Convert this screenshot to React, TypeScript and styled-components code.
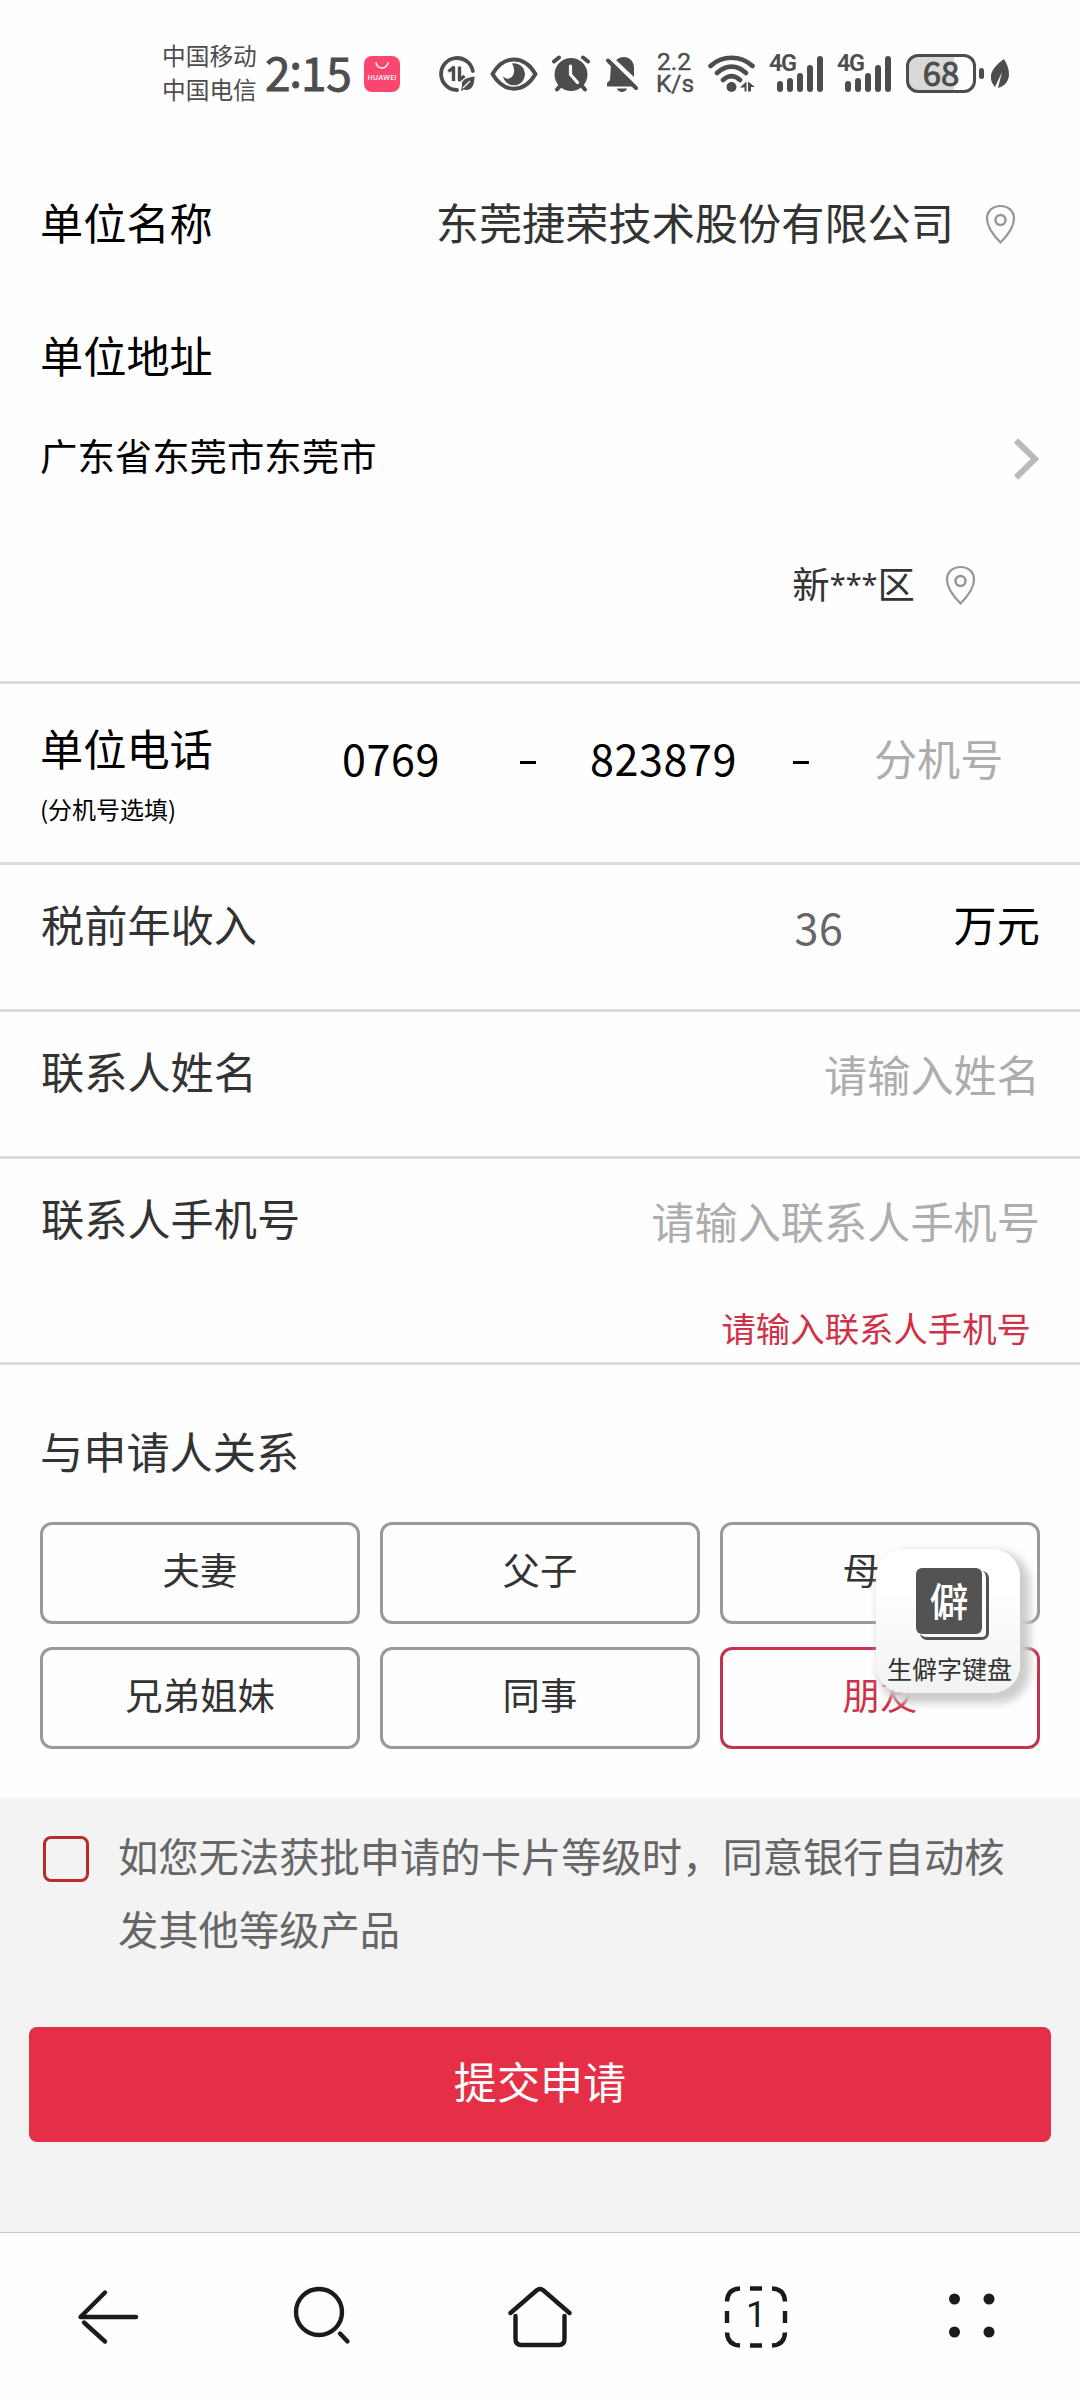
import React from 'react';
import styled, { createGlobalStyle } from 'styled-components';

const GlobalStyle = createGlobalStyle`
  * { box-sizing: border-box; }
  body {
    margin: 0;
    background: #fff;
    font-family: "Noto Sans CJK SC", "Noto Sans", sans-serif;
  }
`;

const Screen = styled.div`
  position: relative;
  display: flex;
  flex-direction: column;
  width: 1080px;
  height: 2400px;
  overflow: hidden;
  background: #fefefe;
  color: #333;
`;

/* ---------- status bar ---------- */

const StatusBar = styled.header`
  display: flex;
  align-items: center;
  height: 146px;
  padding-left: 162px;
  color: #4d4d4d;
`;

const Carriers = styled.div`
  width: 102px;
  font-size: 23.7px;
  line-height: 34px;
  margin-top: -3px;
  white-space: nowrap;
`;

const Clock = styled.div`
  display: flex;
  width: 100px;
  font-size: 46px;
  font-weight: 400;
  -webkit-text-stroke: 0.9px #4d4d4d;
  line-height: 60px;
  letter-spacing: -0.2px;
  padding-left: 1px;
  margin-top: -5px;
`;

const Colon = styled.span`
  margin: -4px -1px 0 -1px;
`;

const StatusIcon = styled.svg<{ $w: number; $gap: number }>`
  flex: none;
  width: ${p => p.$w}px;
  height: 46px;
  margin-right: ${p => p.$gap}px;
  margin-top: 1px;
`;

const NetSpeed = styled.div`
  display: flex;
  flex-direction: column;
  width: 36px;
  margin-right: 16px;
  font-size: 24.5px;
  line-height: 22px;
  text-align: center;
  font-family: Roboto, sans-serif;
  -webkit-text-stroke: 0.4px #4d4d4d;
`;

const Signal = styled.div`
  position: relative;
  width: 54px;
  height: 46px;
  margin-right: 14px;
`;

const SignalTag = styled.span`
  position: absolute;
  left: 0;
  top: 2px;
  font: 600 23.5px/23px Roboto, sans-serif;
  letter-spacing: -1.5px;
`;

const SignalBars = styled.div`
  display: flex;
  align-items: flex-end;
  gap: 4px;
  height: 42px;
  padding-left: 8px;
`;

const Bar = styled.i<{ $h: number }>`
  width: 6px;
  height: ${p => p.$h}px;
  border-radius: 3px;
  background: #4d4d4d;
`;

const Battery = styled.div`
  width: 70px;
  height: 39px;
  margin-left: 1px;
  border: 3px solid #4d4d4d;
  border-radius: 12px;
  background: linear-gradient(90deg, #d9d9d9 70%, #fefefe 70%);
  text-align: center;
  font-size: 33px;
  font-weight: 400;
  -webkit-text-stroke: 1px #4d4d4d;
  line-height: 30px;
`;

const BatteryNub = styled.i`
  width: 5px;
  height: 11px;
  margin: 0 6px 0 3px;
  border-radius: 3px;
  background: #4d4d4d;
`;

/* ---------- form ---------- */

const Row = styled.div<{ $h: number; $line?: boolean; $pb?: number }>`
  display: flex;
  flex: none;
  align-items: center;
  height: ${p => p.$h}px;
  padding: 0 40px ${p => p.$pb ?? 0}px;
  border-bottom: ${p => (p.$line ? '3px solid #dcdcdc' : 'none')};
`;

const Label = styled.span<{ $dark?: boolean }>`
  font-size: 43.2px;
  line-height: 64px;
  white-space: nowrap;
  color: ${p => (p.$dark ? '#000' : '#333')};
`;

const Value = styled(Label)`
  margin-left: auto;
`;

const Address = styled.span<{ $dark?: boolean }>`
  font-size: 37.4px;
  line-height: 56px;
  color: ${p => (p.$dark ? '#000' : '#333')};
`;

const PlaceValue = styled(Address)`
  display: flex;
  margin: 2px 0 0 auto;
`;

const Masked = styled.span`
  font-family: "Noto Sans", sans-serif;
  font-size: 29px;
  line-height: 58px;
`;

const Pin = styled.svg<{ $left: number; $right: number }>`
  width: 31px;
  height: 40px;
  margin: 5px ${p => p.$right}px 0 ${p => p.$left}px;
`;

const Chevron = styled.svg`
  width: 26px;
  height: 42px;
  margin: 8px 0 0 auto;
`;

const Placeholder = styled(Label)`
  margin-left: auto;
  color: #adadad;
`;

const FieldRow = styled.div<{ $h: number }>`
  display: flex;
  flex: none;
  flex-direction: column;
  height: ${p => p.$h}px;
  padding: 26px 40px 0 41px;
  border-bottom: 3px solid #dcdcdc;
`;

const FieldLine = styled.div`
  display: flex;
  align-items: flex-start;

  ${Placeholder} {
    padding-top: 3px;
  }
`;

const Amount = styled.span`
  margin: 3px 110px 0 auto;
  font-size: 43.1px;
  line-height: 64px;
  letter-spacing: 0.6px;
  color: #666;
`;

const ErrorText = styled.p`
  margin: 50px 9px 0 0;
  text-align: right;
  font-size: 34.4px;
  line-height: 50px;
  color: #cf3248;
`;

const PhoneRow = styled.div`
  display: grid;
  grid-template-columns: 302px 178px 70px 203px 81px 1fr;
  flex: none;
  height: 181px;
  padding: 0 40px;
  border-bottom: 3px solid #dcdcdc;
`;

const PhoneLabel = styled.div`
  display: flex;
  flex-direction: column;
  padding-top: 31px;
`;

const Hint = styled.span`
  font-size: 24px;
  line-height: 36px;
  margin-top: 12px;
  color: #000;
`;

const PhonePart = styled.span<{ $muted?: boolean }>`
  padding-top: 41px;
  font-size: 43.1px;
  line-height: 64px;
  letter-spacing: ${p => (p.$muted ? 0 : 0.6)}px;
  color: ${p => (p.$muted ? '#adadad' : '#000')};
`;

const Dash = styled.i`
  width: 16px;
  height: 3px;
  margin-top: 77px;
  background: #000;
`;

const Relation = styled.section`
  display: flex;
  flex: none;
  flex-direction: column;
  height: 433px;
  padding: 53px 40px 0;
`;

const Options = styled.div`
  display: grid;
  grid-template-columns: repeat(3, 320px);
  gap: 23px 20px;
  margin-top: 40px;
`;

const Option = styled.button<{ $on?: boolean }>`
  height: 102px;
  padding: 0 0 8px;
  border: 3px solid ${p => (p.$on ? '#c23350' : '#999')};
  border-radius: 12px;
  background: #fefefe;
  color: ${p => (p.$on ? '#d0304a' : '#333')};
  font-family: inherit;
  font-size: 37.4px;
  line-height: 56px;
`;

/* ---------- agreement and submit ---------- */

const Footer = styled.section`
  display: flex;
  flex-direction: column;
  flex: none;
  height: 434px;
  background: #f3f3f3;
`;

const Agreement = styled.div`
  display: flex;
  padding: 20px 0 0 43px;
`;

const Checkbox = styled.i`
  flex: none;
  width: 46px;
  height: 46px;
  margin: 18px 29px 0 0;
  border: 3px solid #b92b2d;
  border-radius: 8px;
`;

const Terms = styled.p`
  width: 890px;
  margin: 0;
  font-size: 40.3px;
  line-height: 73px;
  color: #666;
`;

const Submit = styled.button`
  height: 115px;
  margin: 63px 29px 0;
  padding: 0 0 9px;
  border: 0;
  border-radius: 8px;
  background: #e52f46;
  color: #fff;
  font-family: inherit;
  font-size: 43.1px;
`;

/* ---------- browser bar ---------- */

const NavBar = styled.nav`
  display: grid;
  grid-template-columns: repeat(5, 216px);
  flex: none;
  height: 168px;
  border-top: 1px solid #c6c6c6;
`;

const NavItem = styled.div`
  position: relative;
  display: flex;
  justify-content: center;
  padding-top: 48px;
`;

const NavSvg = styled.svg`
  width: 72px;
  height: 72px;
  fill: none;
  stroke: #191b1d;
  stroke-width: 4.4;
  stroke-linecap: round;
  stroke-linejoin: round;
`;

const DashedFrame = styled(NavSvg)`
  stroke-linecap: butt;
`;

const TabCount = styled.span`
  position: absolute;
  left: 0;
  right: 0;
  top: 62px;
  text-align: center;
  font-family: Roboto, sans-serif;
  font-size: 36px;
  line-height: 40px;
  color: #191b1d;
`;

/* ---------- floating keyboard button ---------- */

const KeyboardFab = styled.div`
  position: absolute;
  left: 876px;
  top: 1549px;
  display: flex;
  flex-direction: column;
  align-items: center;
  width: 144px;
  height: 144px;
  padding-top: 19px;
  border-radius: 28px;
  background: linear-gradient(#fff 25%, #f2f2f2);
  box-shadow: 6px 6px 8px 4px #cdcdcd;
`;

const FabGlyph = styled.div`
  position: relative;
  width: 66px;
  height: 66px;
  margin-left: 2px;
  border-radius: 6px;
  background: #535353;
  color: #fff;
  text-align: center;
  font-size: 39px;
  font-weight: 500;
  line-height: 62px;

  &::before {
    content: '';
    position: absolute;
    right: -7px;
    bottom: -6px;
    width: 66px;
    height: 66px;
    border: 3px solid #535353;
    border-width: 0 3px 3px 0;
    border-radius: 7px;
  }
`;

const FabText = styled.span`
  margin: 16px 0 0 3px;
  font-size: 25px;
  line-height: 36px;
  white-space: nowrap;
  color: #333;
`;

const MapPin = ({ left, right }: { left: number; right: number }) => (
  <Pin $left={left} $right={right} viewBox="0 0 31 40" fill="none" stroke="#979797" strokeWidth="2.2">
    <path d="M15.5 38.5C12 35 2 24 2 14.5C2 7 8 2 15.5 2S29 7 29 14.5C29 24 19 35 15.5 38.5Z" />
    <circle cx="15.5" cy="16" r="5" strokeWidth="2.5" />
  </Pin>
);

const SignalIcon = () => (
  <Signal>
    <SignalTag>4G</SignalTag>
    <SignalBars>
      {[11, 14, 19, 27, 36].map(h => <Bar key={h} $h={h} />)}
    </SignalBars>
  </Signal>
);

const Status = () => (
  <StatusBar>
    <Carriers>中国移动<br />中国电信</Carriers>
    <Clock>2<Colon>:</Colon>15</Clock>
    <StatusIcon $w={36} $gap={39} viewBox="0 0 36 46">
      <rect y="5" width="36" height="36" rx="8" fill="#fb476f" />
      <path d="M12 11a6 6 0 0 0 12 0" fill="none" stroke="#fff" strokeWidth="1.3" />
      <text x="18" y="28.5" textAnchor="middle" textLength="29" fontFamily="Open Sans" fontSize="7" fontWeight="600" fill="#fff">HUAWEI</text>
    </StatusIcon>
    <StatusIcon $w={36} $gap={15} viewBox="0 0 36 46" fill="none" stroke="#4d4d4d">
      <path d="M18 39A16 16 0 1 1 33.8 20" strokeWidth="3.8" strokeLinecap="round" />
      <path d="M9.500 20.500l5-4V30M20.500 15.500V29l5-4" strokeWidth="3.4" strokeLinejoin="round" />
      <path d="M35.5 25.5c-9 1-13.500 4-12.500 9.500l-1 5.500 2.500-2c8 2 11-4 11-13z" fill="#4d4d4d" stroke="none" />
      <path d="M24 37l7-7" stroke="#fefefe" strokeWidth="1.3" />
    </StatusIcon>
    <StatusIcon $w={48} $gap={14} viewBox="0 0 48 46">
      <path d="M2.500 23C14 3.500 34 3.500 45.500 23C34 42.500 14 42.500 2.500 23Z" fill="none" stroke="#4d4d4d" strokeWidth="4" strokeLinejoin="round" />
      <path d="M22 12.500a11 11 0 1 1-9 12.500c2 2.500 4 3 6 2.500c5-1.500 7-8 3-15z" fill="#4d4d4d" />
    </StatusIcon>
    <StatusIcon $w={38} $gap={15} viewBox="0 0 38 46" stroke="#4d4d4d" strokeLinecap="round" fill="none">
      <circle cx="19" cy="23.500" r="16.500" fill="#4d4d4d" stroke="none" />
      <path d="M2 10.500L7 6.500M36 10.500L31 6.500M8 35l-3 3.500M30 35l3 3.500" strokeWidth="4" />
      <path d="M18.500 15v8.500l7 8" stroke="#fefefe" strokeWidth="3.2" />
    </StatusIcon>
    <StatusIcon $w={34} $gap={17} viewBox="0 0 34 46">
      <path d="M6 13L29 35.500H2V32L5 29Z M12 8.500c8-6 17 0 17 8v9.500L11 9Z M12 37.500h10c-1 4.500-9 4.500-10 0z" fill="#4d4d4d" />
      <path d="M3 9.500L31 37" stroke="#4d4d4d" strokeWidth="4" strokeLinecap="round" />
    </StatusIcon>
    <NetSpeed><span>2.2</span><span>K/s</span></NetSpeed>
    <StatusIcon $w={47} $gap={14} viewBox="0 0 47 46" fill="none" stroke="#4d4d4d" strokeWidth="4.600" strokeLinecap="round">
      <path d="M2.500 15C14 4 33 4 44.500 15M9 22c9-8.500 20-8.500 29 0M15 29c5.500-5 11.500-5 17 0" />
      <circle cx="23.500" cy="36" r="5" fill="#4d4d4d" stroke="none" />
      <path d="M32 36.500l6.500-6v10h-2v-4zM40 30.500l7 5.500h-4v4.500h-3z" fill="#4d4d4d" stroke="none" />
    </StatusIcon>
    <SignalIcon />
    <SignalIcon />
    <Battery>68</Battery>
    <BatteryNub />
    <StatusIcon $w={20} $gap={0} viewBox="0 0 20 46">
      <path d="M14 8c7 11 8 25-6 29l4-16-7 15C-3 27 1 17 14 8z" fill="#4d4d4d" />
    </StatusIcon>
  </StatusBar>
);

const relations = ['夫妻', '父子', '母子', '兄弟姐妹', '同事', '朋友'];

export default function App() {
  return (
    <Screen>
      <GlobalStyle />
      <Status />

      <Row $h={150}>
        <Label $dark>单位名称</Label>
        <Value>东莞捷荣技术股份有限公司</Value>
        <MapPin left={31} right={24} />
      </Row>
      <Row $h={116}>
        <Label $dark>单位地址</Label>
      </Row>
      <Row $h={85}>
        <Address $dark>广东省东莞市东莞市</Address>
        <Chevron viewBox="0 0 26 42" fill="none" stroke="#bababa" strokeWidth="6">
          <path d="M2 2.500L21 21L2 39.500" />
        </Chevron>
      </Row>
      <Row $h={187} $line $pb={13}>
        <PlaceValue>新<Masked>***</Masked>区</PlaceValue>
        <MapPin left={30} right={64} />
      </Row>

      <PhoneRow>
        <PhoneLabel>
          <Label $dark>单位电话</Label>
          <Hint>(分机号选填)</Hint>
        </PhoneLabel>
        <PhonePart>0769</PhonePart>
        <Dash />
        <PhonePart>823879</PhonePart>
        <Dash />
        <PhonePart $muted>分机号</PhonePart>
      </PhoneRow>

      <FieldRow $h={147}>
        <FieldLine>
          <Label>税前年收入</Label>
          <Amount>36</Amount>
          <Label $dark>万元</Label>
        </FieldLine>
      </FieldRow>
      <FieldRow $h={147}>
        <FieldLine>
          <Label>联系人姓名</Label>
          <Placeholder>请输入姓名</Placeholder>
        </FieldLine>
      </FieldRow>
      <FieldRow $h={206}>
        <FieldLine>
          <Label>联系人手机号</Label>
          <Placeholder>请输入联系人手机号</Placeholder>
        </FieldLine>
        <ErrorText>请输入联系人手机号</ErrorText>
      </FieldRow>

      <Relation>
        <Label>与申请人关系</Label>
        <Options>
          {relations.map(name => (
            <Option key={name} $on={name === '朋友'}>{name}</Option>
          ))}
        </Options>
      </Relation>

      <Footer>
        <Agreement>
          <Checkbox />
          <Terms>如您无法获批申请的卡片等级时，同意银行自动核发其他等级产品</Terms>
        </Agreement>
        <Submit>提交申请</Submit>
      </Footer>

      <NavBar>
        <NavItem>
          <NavSvg viewBox="0 0 72 72"><path d="M64 36H8.500L33 11.500M12 41.500L33 60.500" /></NavSvg>
        </NavItem>
        <NavItem>
          <NavSvg viewBox="0 0 72 72"><circle cx="31" cy="31" r="23" /><path d="M52 52.500L59.500 60.500" /></NavSvg>
        </NavItem>
        <NavItem>
          <NavSvg viewBox="0 0 72 72">
            <path d="M6.500 32L32.500 9.500Q36 6.500 39.500 9.500L65.500 32M11.500 35V58Q11.500 64 17.500 64H54.500Q60.500 64 60.500 58V35" />
          </NavSvg>
        </NavItem>
        <NavItem>
          <DashedFrame viewBox="0 0 72 72">
            <path d="M20 7.500Q7.500 8 7 20.500M52 7.500Q64.500 8 65 20.500M20 64.500Q7.500 64 7 51.500M52 64.500Q64.500 64 65 51.500M30 7.500H42M30 64.500H42M7 30V42M65 30V42" />
          </DashedFrame>
          <TabCount>1</TabCount>
        </NavItem>
        <NavItem>
          <NavSvg viewBox="0 0 72 72">
            {[[18.500, 18], [53, 18], [18.500, 51], [53, 51]].map(([x, y]) => (
              <circle key={`${x}-${y}`} cx={x} cy={y} r="5.500" fill="#191b1d" stroke="none" />
            ))}
          </NavSvg>
        </NavItem>
      </NavBar>

      <KeyboardFab>
        <FabGlyph>僻</FabGlyph>
        <FabText>生僻字键盘</FabText>
      </KeyboardFab>
    </Screen>
  );
}
